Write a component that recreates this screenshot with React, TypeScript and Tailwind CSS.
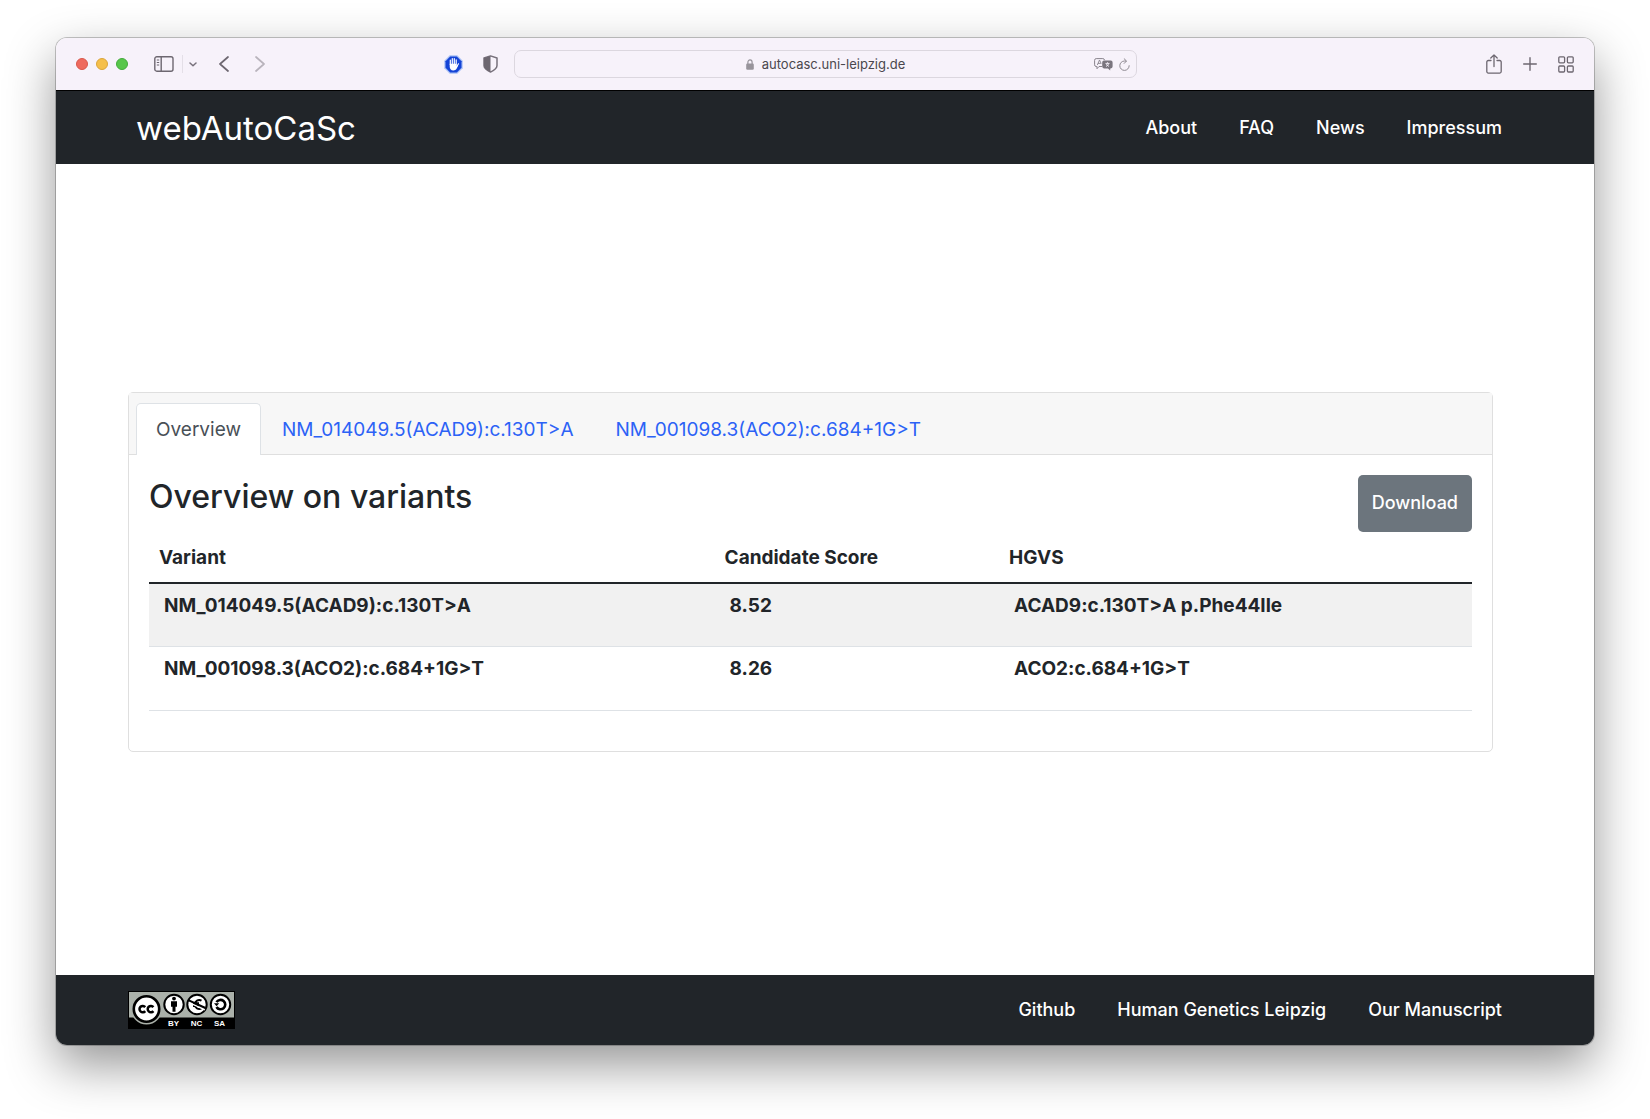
import React from "react";

const navLinks = ["About", "FAQ", "News", "Impressum"];
const footerLinks = ["Github", "Human Genetics Leipzig", "Our Manuscript"];
const tabs = ["Overview", "NM_014049.5(ACAD9):c.130T>A", "NM_001098.3(ACO2):c.684+1G>T"];
const rows = [
  { variant: "NM_014049.5(ACAD9):c.130T>A", score: "8.52", hgvs: "ACAD9:c.130T>A p.Phe44Ile" },
  { variant: "NM_001098.3(ACO2):c.684+1G>T", score: "8.26", hgvs: "ACO2:c.684+1G>T" },
];

function SidebarIcon() {
  return (
    <svg width="20" height="16" viewBox="0 0 20 16" fill="none" stroke="#6d6770" strokeWidth="1.4">
      <rect x="0.8" y="0.8" width="18.2" height="14.4" rx="2" />
      <path d="M7.2 1v14" />
      <path d="M2.8 4h2.4M2.8 6.5h2.4M2.8 9h2.4" strokeWidth="1" />
    </svg>
  );
}

function Chevron({ dir, color }: { dir: "left" | "right"; color: string }) {
  return (
    <svg width="10" height="16" viewBox="0 0 10 16" fill="none" stroke={color} strokeWidth="1.7" strokeLinecap="round" strokeLinejoin="round">
      <path d={dir === "left" ? "M9 1L1 8l8 7" : "M1 1l8 7-8 7"} />
    </svg>
  );
}

function AdblockIcon() {
  return (
    <svg width="19" height="19" viewBox="0 0 19 19">
      <path d="M5.7 0.3h7.6l5.4 5.4v7.6l-5.4 5.4H5.7L0.3 13.3V5.7z" fill="#a9c0f5" />
      <path d="M6.2 1.5h6.6l4.7 4.7v6.6l-4.7 4.7H6.2l-4.7-4.7V6.2z" fill="#1443d6" />
      <g stroke="#fff" strokeLinecap="round" strokeWidth="1.2" fill="none">
        <path d="M6.3 9.5V5M8.3 9V3.6M10.3 9V3.5M12.2 9V4.8M12.6 12l1.9-3.2" />
      </g>
      <path d="M5.7 8.8h7.1v2.5l1-1c-.4 2.5-1.4 5.2-4.4 5.2-2.6 0-3.7-1.8-3.7-4z" fill="#fff" />
    </svg>
  );
}

function ShieldIcon() {
  return (
    <svg width="15" height="18" viewBox="0 0 15 18">
      <path d="M7.5 .9L14 3v7.6c0 3-3.2 5-6.5 6.5C4.2 15.6 1 13.6 1 10.6V3z" fill="none" stroke="#77717b" strokeWidth="1.5" strokeLinejoin="round" />
      <path d="M7.5 .9L1 3v7.6c0 3 3.2 5 6.5 6.5z" fill="#6d6770" />
    </svg>
  );
}

function LockIcon() {
  return (
    <svg width="8" height="11" viewBox="0 0 8 11">
      <path d="M1.9 5V3.2a2.1 2.3 0 0 1 4.2 0V5" fill="none" stroke="#98949b" strokeWidth="1.2" />
      <rect x="0.2" y="4.6" width="7.6" height="6.2" rx="1.2" fill="#98949b" />
    </svg>
  );
}

function TranslateIcon() {
  return (
    <svg width="19" height="13" viewBox="0 0 19 13">
      <path d="M8 8.5H5L3 10.7V8.5H2.2A1.7 1.7 0 0 1 .6 6.8V2.3A1.7 1.7 0 0 1 2.2.6h6.6a1.7 1.7 0 0 1 1.7 1.5" fill="none" stroke="#88838c" />
      <path d="M3.3 7l2.2-5 1.7 3.6M4 5.4h2.8" fill="none" stroke="#88838c" strokeWidth=".9" />
      <path d="M10 2.6h6.8A1.8 1.8 0 0 1 18.6 4.4v4.2a1.8 1.8 0 0 1-1.8 1.8h-.6v2.2l-2.2-2.2h-4a1.8 1.8 0 0 1-1.8-1.8V4.4A1.8 1.8 0 0 1 10 2.6z" fill="#7a757e" />
      <path d="M11.5 5.4h4M13.5 4.3v1.1M12 8.4c1.5-.6 2.4-1.6 2.7-2.8M12.3 5.8c.5 1.3 1.4 2.1 2.7 2.6" fill="none" stroke="#f7f2fa" strokeWidth=".9" />
    </svg>
  );
}

function ReloadIcon() {
  return (
    <svg width="11" height="13" viewBox="0 0 11 13" fill="none" stroke="#8e8991" strokeLinecap="round" strokeLinejoin="round">
      <path d="M7 3H5.5a4.7 4.7 0 1 0 4.7 4.7" />
      <path d="M5.2.8L7.5 3 5.2 5.4" />
    </svg>
  );
}

function ShareIcon() {
  return (
    <svg width="16" height="20" viewBox="0 0 16 20" fill="none" stroke="#6d6770" strokeWidth="1.3" strokeLinecap="round" strokeLinejoin="round">
      <path d="M5 6.5H2.3A1.5 1.5 0 0 0 .8 8v9.6a1.5 1.5 0 0 0 1.5 1.5h11.4a1.5 1.5 0 0 0 1.5-1.5V8a1.5 1.5 0 0 0-1.5-1.5H11" />
      <path d="M8 12.5V1M4.8 4L8 .9 11.2 4" />
    </svg>
  );
}

function PlusIcon() {
  return (
    <svg width="14" height="14" viewBox="0 0 14 14" stroke="#6d6770" strokeWidth="1.4" strokeLinecap="round">
      <path d="M7 .7v12.6M.7 7h12.6" />
    </svg>
  );
}

function GridIcon() {
  return (
    <svg width="16" height="17" viewBox="0 0 16 17" fill="none" stroke="#6d6770" strokeWidth="1.3">
      <rect x=".8" y=".8" width="5.8" height="6" rx="1" />
      <rect x="9.4" y=".8" width="5.8" height="6" rx="1" />
      <rect x=".8" y="10" width="5.8" height="6" rx="1" />
      <rect x="9.4" y="10" width="5.8" height="6" rx="1" />
    </svg>
  );
}

function LicenseBadge() {
  const label = "font-['Liberation_Sans'] text-[8px] font-bold";
  return (
    <svg width="107" height="38" viewBox="0 0 107 38" role="img" aria-label="Creative Commons BY NC SA">
      <rect width="107" height="38" fill="#000" />
      <rect x="1" y="1" width="105" height="25.5" fill="#abb1aa" />
      <circle cx="18.5" cy="18" r="15.5" fill="#abb1aa" />
      <circle cx="18.5" cy="18" r="12.7" fill="#fff" stroke="#000" strokeWidth="2.6" />
      <g fill="none" stroke="#000" strokeWidth="2.5">
        <path d="M17.2 16.1a3.2 3.2 0 1 0 0 4" />
        <path d="M25.4 16.1a3.2 3.2 0 1 0 0 4" />
      </g>
      <g fill="#fff" stroke="#000" strokeWidth="2">
        <circle cx="46" cy="13.5" r="9.7" />
        <circle cx="69" cy="13.5" r="9.7" />
        <circle cx="92.5" cy="13.5" r="9.7" />
      </g>
      <circle cx="46" cy="7.6" r="1.9" />
      <path d="M43 10.2h6v5.6h-1.5v5h-3v-5H43z" />
      <g fill="none" stroke="#000">
        <path d="M73.5 9.6a4.5 4.5 0 1 0 0 7.8M65 12.2h6M65 15h6" strokeWidth="2" />
        <path d="M60.8 11.4l16 7.4" stroke="#fff" strokeWidth="1.4" />
        <path d="M60.8 9.4l16.6 7.6" strokeWidth="2" />
        <path d="M88.5 11.2a4.7 4.7 0 1 1 0 4.8" strokeWidth="2.6" />
      </g>
      <path d="M86 12.3h5.2l-2.6 2.9z" />
      <g fill="#fff" textAnchor="middle">
        <text x="45.5" y="35" className={label}>BY</text>
        <text x="68.5" y="35" className={label}>NC</text>
        <text x="91.5" y="35" className={label}>SA</text>
      </g>
    </svg>
  );
}

function BrowserBar() {
  return (
    <div className="flex h-[53px] shrink-0 items-center border-b border-black bg-[#f7f2fa] px-5">
      <div className="flex flex-1 items-center">
        <div className="flex gap-2">
          <button aria-label="Close" className="size-3 rounded-full border border-[#d9584b] bg-[#ee6a5e]" />
          <button aria-label="Minimize" className="size-3 rounded-full border border-[#dba53a] bg-[#f5bf4a]" />
          <button aria-label="Zoom" className="size-3 rounded-full border border-[#44ab3c] bg-[#57c64a]" />
        </div>
        <button aria-label="Sidebar" className="ml-[26px]"><SidebarIcon /></button>
        <div className="ml-2 h-[18px] w-px bg-[#e4dfe7]" />
        <button aria-label="Tab groups" className="ml-[6px]">
          <svg width="8" height="5" viewBox="0 0 8 5" fill="none" stroke="#78727c" strokeWidth="1.5" strokeLinecap="round" strokeLinejoin="round">
            <path d="M1 1l3 2.8L7 1" />
          </svg>
        </button>
        <button aria-label="Back" className="ml-[22px]"><Chevron dir="left" color="#6d6770" /></button>
        <button aria-label="Forward" className="ml-[26px]"><Chevron dir="right" color="#b9b4bc" /></button>
        <div className="mr-4 ml-auto flex items-center gap-5">
          <button aria-label="Content blocker"><AdblockIcon /></button>
          <button aria-label="Privacy report"><ShieldIcon /></button>
        </div>
      </div>
      <div className="flex h-7 w-[42%] max-w-[623px] items-center rounded-[7px] border border-[#dcd7df] pr-[6px]">
        <div className="flex flex-1 items-center justify-center gap-2 pl-[43px]">
          <LockIcon />
          <span className="text-[13px] leading-4 text-[#4a474d]">autocasc.uni-leipzig.de</span>
        </div>
        <button aria-label="Translate"><TranslateIcon /></button>
        <button aria-label="Reload" className="ml-[6px]"><ReloadIcon /></button>
      </div>
      <div className="flex flex-1 items-center justify-end gap-[21px]">
        <button aria-label="Share"><ShareIcon /></button>
        <button aria-label="New tab"><PlusIcon /></button>
        <button aria-label="Tab overview"><GridIcon /></button>
      </div>
    </div>
  );
}

export default function App() {
  return (
    <div className="flex min-h-screen bg-white px-14 pt-[38px] pb-[74px] font-['Inter',sans-serif] text-[19px] leading-[30px] text-[#212529]">
      <div className="flex flex-1 flex-col overflow-hidden rounded-[11px] bg-white shadow-[0_0_0_1px_rgba(0,0,0,0.22),0_20px_50px_rgba(0,0,0,0.42)]">
        <BrowserBar />
        <header className="flex h-[73px] shrink-0 items-center justify-between bg-[#212529] pr-[92px] pl-20 text-white">
          <a href="#home" className="text-[33px] leading-[44px]">webAutoCaSc</a>
          <nav className="flex gap-[42px] text-lg font-medium">
            {navLinks.map((l) => <a key={l} href={"#" + l}>{l}</a>)}
          </nav>
        </header>
        <main className="flex flex-1 flex-col justify-center pt-[5px] pr-[101px] pl-[72px]">
          <section className="rounded-[5px] border border-[#dfdfdf]">
            <div role="tablist" className="flex border-b border-[#dfdfdf] bg-[#f7f7f7] px-[7px] pt-[10px]">
              {tabs.map((t, i) => (
                <button
                  key={t}
                  role="tab"
                  aria-selected={i === 0}
                  className={
                    i === 0
                      ? "-mb-px h-[52px] rounded-t-[5px] border border-b-0 border-[#dee2e6] bg-white px-[19px] pt-px text-[#495057]"
                      : "h-[51px] px-[21px] pt-[3px] text-[#2c62f6]"
                  }
                >
                  {t}
                </button>
              ))}
            </div>
            <div className="px-5 pt-5 pb-10">
              <div className="flex items-start justify-between">
                <h1 className="text-[32px] leading-[44px] font-medium">Overview on variants</h1>
                <button className="h-[57px] rounded-[5px] bg-[#6c757d] px-[14px] text-lg font-medium text-white">Download</button>
              </div>
              <table className="w-full table-fixed border-collapse text-left font-bold">
                <thead>
                  <tr className="h-[51px] border-b-2 border-[#212529]">
                    <th className="w-[42.75%] px-[10px] pt-[2px]">Variant</th>
                    <th className="w-[21.5%] px-[10px] pt-[2px]">Candidate Score</th>
                    <th className="px-[10px] pt-[2px]">HGVS</th>
                  </tr>
                </thead>
                <tbody>
                  {rows.map((r) => (
                    <tr key={r.variant} className="h-16 border-b border-[#dee2e6] align-top odd:bg-[#f1f1f1]">
                      <td className="px-[15px] pt-[7px]">{r.variant}</td>
                      <td className="px-[15px] pt-[7px]">{r.score}</td>
                      <td className="px-[15px] pt-[7px]">{r.hgvs}</td>
                    </tr>
                  ))}
                </tbody>
              </table>
            </div>
          </section>
        </main>
        <footer className="flex h-[70px] shrink-0 items-center justify-between bg-[#212529] pr-[92px] pl-[72px] text-white">
          <a href="#license"><LicenseBadge /></a>
          <nav className="flex gap-[42px] text-lg font-medium">
            {footerLinks.map((l) => <a key={l} href={"#" + l.replaceAll(" ", "-")}>{l}</a>)}
          </nav>
        </footer>
      </div>
    </div>
  );
}
